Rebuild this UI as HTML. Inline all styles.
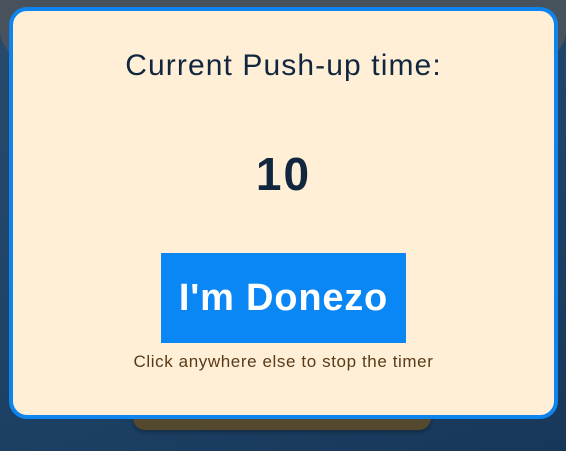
<!DOCTYPE html>
<html><head><style>
html,body{margin:0;padding:0;width:566px;height:451px;overflow:hidden;}
body{background:linear-gradient(160deg,#2a4a6a 0%,#1f4468 50%,#17375a 100%);position:relative;font-family:"Liberation Sans",sans-serif;}
.top{position:absolute;left:0;top:0;width:566px;height:60px;background:#48525c;border-radius:0 0 30px 30px;}
.under{position:absolute;left:133px;top:400px;width:298px;height:30px;background:#54492e;border-radius:0 0 12px 12px;box-shadow:0 2px 4px rgba(0,0,0,.3);}
.card{position:absolute;left:9px;top:7px;width:541px;height:404px;background:#ffefd6;border:4px solid #0d84ee;border-radius:18px;}
.t{position:absolute;left:0;right:0;top:38px;text-align:center;font-size:30px;letter-spacing:1.1px;color:#11263f;}
.n{position:absolute;left:0;right:0;top:136px;text-align:center;font-size:46px;letter-spacing:2px;font-weight:bold;color:#11263f;}
.b{position:absolute;left:148px;top:242px;width:245px;height:90px;background:#0a87f5;color:#fff;font-weight:bold;font-size:38px;letter-spacing:0.8px;line-height:90px;text-align:center;}
.c{position:absolute;left:0;right:0;top:341px;text-align:center;font-size:17px;letter-spacing:0.6px;color:#5a3a18;}
</style></head><body>
<div class="top"></div>
<div class="under"></div>
<div class="card">
<div class="t">Current Push-up time:</div>
<div class="n">10</div>
<div class="b">I'm Donezo</div>
<div class="c">Click anywhere else to stop the timer</div>
</div>
</body></html>
